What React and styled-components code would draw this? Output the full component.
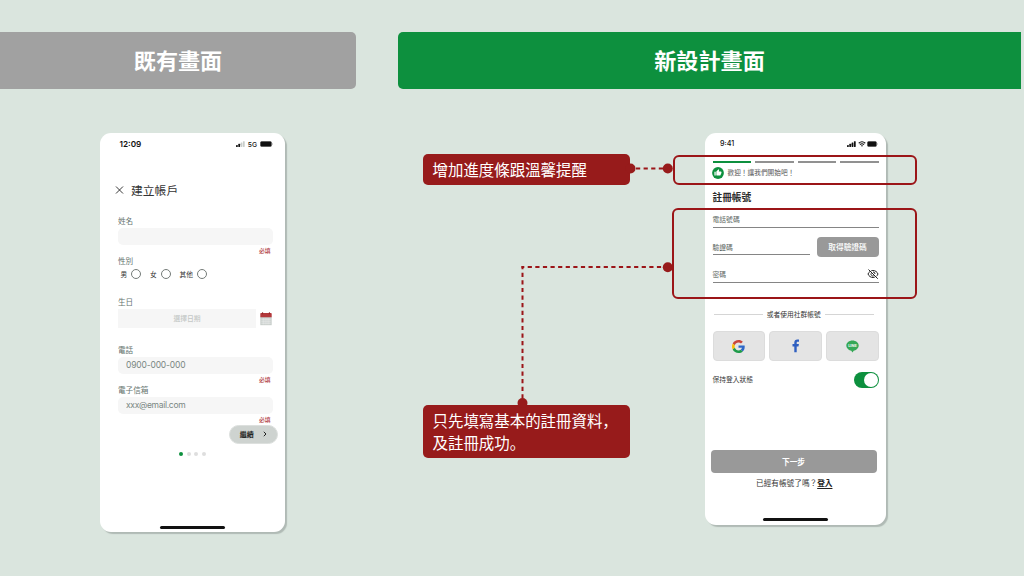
import React, { useState } from 'react'
import styled, { createGlobalStyle } from 'styled-components'

const GlobalStyle = createGlobalStyle`
* {
  box-sizing: border-box;
}

body {
  margin: 0;
  background: #dae5de;
  font-family: "Noto Sans CJK TC", "Noto Sans", sans-serif;
}

button {
  font-family: inherit;
  border: 0;
  padding: 0;
}
`;

const Page = styled.div`
position: relative;
width: 1024px;
height: 576px;
overflow: hidden;
padding-top: 32px;
background: #dae5de;
`;

const Banners = styled.div`
display: flex;
gap: 42px;
height: 57px;
`;

const Banner = styled.h1`
display: flex;
align-items: center;
justify-content: center;
margin: 0;
padding: 0 0 4px 0;
width: ${props => props.$width}px;
border-radius: ${props => props.$radius};
background: ${props => props.$color};
color: #fff;
font-size: 22.1px;
font-weight: 700;
`;

const Board = styled.div`
display: flex;
align-items: flex-start;
padding: 43.5px 0 0 100px;
`;

const Phone = styled.section`
display: flex;
flex-direction: column;
flex: none;
width: ${props => props.$width}px;
height: ${props => props.$height}px;
border-radius: 11px;
background: #fff;
box-shadow: 2px 2px 1px #b0bab5;
`;

const StatusBar = styled.div`
display: flex;
align-items: center;
height: 24px;
padding: ${props => props.$pad};
font-family: Inter, sans-serif;
font-size: ${props => props.$size}px;
font-weight: ${props => props.$weight};
color: #111;

& svg {
  display: block;
}
`;

const StatusIcons = styled.div`
display: flex;
align-items: center;
gap: ${props => props.$gap || 2}px;
margin-left: auto;
font-size: 6.8px;
font-weight: 500;
`;

const HomeBar = styled.div`
width: 65.5px;
height: 3px;
margin: auto auto 3.5px;
border-radius: 2px;
background: #111;
`;

/* 既有畫面 */
const OldTitle = styled.h2`
display: flex;
align-items: center;
gap: 7px;
height: 24px;
margin: 21px 0 13px 15px;
font-size: 11.8px;
font-weight: 400;
color: #333;
`;

const OldForm = styled.form`
display: flex;
flex-direction: column;
padding: 0 12px 0 18px;
`;

const OldLabel = styled.label`
height: ${props => props.$height || 12}px;
margin-top: ${props => props.$top || 0}px;
line-height: ${props => props.$line || 10}px;
font-size: 7.6px;
color: #65736f;
`;

const OldInput = styled.input`
width: 155px;
height: 17px;
padding: 0 8px;
border: 0;
border-radius: 5px;
background: #f6f6f6;
font-family: Inter, sans-serif;
font-size: 8.5px;
letter-spacing: ${props => props.$spacing || 0}px;
color: #6b7a75;

&::placeholder {
  color: #7a8783;
  opacity: 1;
}
`;

const Required = styled.span`
align-self: flex-end;
height: 10px;
margin: 1px 2.5px 0 0;
line-height: 10px;
font-size: 5.8px;
font-weight: 500;
color: #b03a3e;
`;

const Radios = styled.div`
display: flex;
gap: 8.8px;
height: 13px;
margin-bottom: 1px;
padding-left: 2.5px;
`;

const Radio = styled.label`
display: flex;
align-items: center;
gap: 4px;
font-size: 6.7px;
line-height: 10px;
color: #333;
`;

const Circle = styled.span`
width: 10px;
height: 10px;
border: 1px solid #747b78;
border-radius: 50%;
`;

const DateRow = styled.div`
display: flex;
align-items: center;
gap: 3.5px;
`;

const DateBox = styled.div`
width: 138px;
height: 19px;
line-height: 18px;
text-align: center;
background: #f6f6f6;
font-size: 6.8px;
font-weight: 500;
color: #c4c8c6;
`;

const ContinueButton = styled.button`
display: flex;
align-items: center;
justify-content: center;
gap: 9.5px;
align-self: flex-end;
width: 49px;
height: 19px;
margin: 0 -5px 0 0;
border: 1px solid #dde0de;
border-radius: 10px;
background: #ced3d0;
font-size: 7px;
font-weight: 700;
color: #222;
`;

const Dots = styled.div`
display: flex;
justify-content: center;
gap: 3.6px;
margin-top: 8.5px;
`;

const Dot = styled.span`
width: 4px;
height: 4px;
border-radius: 50%;
background: ${props => props.$on ? '#0d903e' : '#dedede'};
`;

/* 說明文字 */
const Notes = styled.div`
display: flex;
flex-direction: column;
gap: 219.5px;
width: 207px;
margin: 21.5px 74.5px 0 138px;
`;

const Note = styled.p`
margin: 0;
padding: 4px 10px 5px 9.5px;
border-radius: 5px;
background: #971b1b;
color: #fff;
font-family: "Noto Sans CJK JP", sans-serif;
font-size: 15.45px;
line-height: 22px;
white-space: nowrap;
`;

const Lines = styled.svg`
position: absolute;
left: 0;
top: 0;
pointer-events: none;
`;

const Frame = styled.div`
position: absolute;
left: ${props => props.$left}px;
top: ${props => props.$top}px;
width: ${props => props.$width}px;
height: ${props => props.$height}px;
border: 2px solid #9b1518;
border-radius: 6px;
`;

/* 新設計畫面 */
const Content = styled.div`
display: flex;
flex-direction: column;
padding: 0 7.5px 0 8px;
`;

const Progress = styled.div`
display: flex;
gap: 4px;
height: 2px;
margin-top: 4.5px;
`;

const Step = styled.span`
flex: 1;
background: ${props => props.$on ? '#0d903e' : '#919191'};
`;

const Welcome = styled.div`
display: flex;
align-items: center;
gap: 3.5px;
height: 12px;
margin: 4px 0 0 -.5px;
font-size: 6.7px;
line-height: 10px;
color: #555;

& span {
  padding-bottom: 2px;
}
`;

const NewTitle = styled.h2`
height: 16px;
margin: 9.5px 0 7.5px;
line-height: 16px;
font-size: 9.7px;
font-weight: 700;
color: #2b2b2b;
`;

const Field = styled.div`
display: flex;
align-items: center;
justify-content: space-between;
width: ${props => props.$width || 166}px;
height: 16px;
padding-bottom: ${props => props.$lift || 0}px;
border-bottom: 1px solid #858585;
font-size: 6.8px;
line-height: 10px;
color: #5c6662;
`;

const CodeRow = styled.div`
display: flex;
align-items: center;
justify-content: space-between;
height: 20px;
margin: 9px 0 10px;
`;

const GrayButton = styled.button`
width: ${props => props.$width}px;
height: ${props => props.$height}px;
padding-bottom: 2px;
border-radius: 4px;
background: #999;
color: #fff;
font-size: 7.7px;
font-weight: ${props => props.$weight || 500};
`;

const NextButton = styled(GrayButton)`
margin-left: -2px;
padding-bottom: 1px;
`;

const Divider = styled.div`
display: flex;
align-items: center;
gap: 4px;
height: 12px;
margin-top: 25.5px;
padding: 0 5px 0 1.5px;
font-size: 6.75px;
line-height: 10px;
color: #333;

& span {
  padding-bottom: 2px;
}

&::before, &::after {
  content: '';
  flex: 1;
  height: 1px;
  background: #d5d5d5;
}
`;

const Socials = styled.div`
display: grid;
grid-template-columns: repeat(3, 1fr);
gap: 4px;
height: 30px;
margin-top: 10.5px;
`;

const SocialButton = styled.button`
display: flex;
align-items: center;
justify-content: center;
border: 1px solid #dcdcdc;
border-radius: 4px;
background: #e4e4e4;
`;

const KeepRow = styled.div`
display: flex;
align-items: center;
justify-content: space-between;
height: 16px;
margin: 11px 0 62px;
font-size: 6.75px;
line-height: 10px;
color: #333;

& > span {
  padding-bottom: 2px;
}
`;

const Toggle = styled.button`
display: flex;
align-items: center;
justify-content: ${props => props.$on ? 'flex-end' : 'flex-start'};
width: 25px;
height: 16px;
padding: 0 1px;
border-radius: 8px;
background: ${props => props.$on ? '#0d903e' : '#bbb'};

& span {
  width: 14px;
  height: 14px;
  border-radius: 50%;
  background: #fff;
}
`;

const LoginText = styled.p`
height: 14px;
margin: 4px 0 0;
line-height: 12px;
padding-right: 2.5px;
text-align: center;
font-size: 7.65px;
color: #333;

& b {
  text-decoration: underline;
  text-underline-offset: 1.5px;
  color: #222;
}
`;

function Signal({ weak }) {
  const heights = [2, 3.2, 4.5, 5.8]
  return (
    <svg width="9" height="6" viewBox="0 0 9 6">
      {heights.map((h, i) =>
        <rect key={i} x={i * 2.3} y={6 - h} width="1.8" height={h} rx=".4" fill={weak && i > 1 ? '#c9cecb' : '#111'} />
      )}
    </svg>
  )
}

function Battery({ width }) {
  return (
    <svg width={width} height="6" viewBox={`0 0 ${width} 6`}>
      <rect x=".2" y=".2" width={width - 1.4} height="5.6" rx="1.5" fill="#999" />
      <rect x=".5" y=".6" width={width - 2.1} height="4.8" rx="1" fill="#111" />
      <path d={`M${width - .9} 2v2q.8-.3.8-1t-.8-1`} fill="#999" />
    </svg>
  )
}

function Wifi() {
  return (
    <svg width="8" height="6" viewBox="0 0 15 12">
      <path d="M1 4.4Q7.5-1.4 14 4.4M3.5 7.2q4-3.4 8 0" fill="none" stroke="#111" strokeWidth="2.3" />
      <path d="M5.3 9.2q2.2-1.7 4.4 0L7.5 11.5z" fill="#111" />
    </svg>
  )
}

function Calendar() {
  return (
    <svg width="12" height="14" viewBox="0 0 12 14">
      <path d="M.3 4.8h11.4v8.4H.3z" fill="#c9cfcc" />
      <path d="M.3 1.7q0-.8.8-.8h9.8q.8 0 .8.8v3.5H.3z" fill="#b3393c" />
      <path d="M2.6.2v2M9.4.2v2" stroke="#8d2225" strokeWidth=".9" />
      <path d="M1.2 7.2h9.6M1.2 9.2h9.6M1.2 11.2h9.6M3.2 6v6.500M5.1 6v6.500M7 6v6.500M8.9 6v6.500" stroke="#f5f6f6" strokeWidth=".45" />
    </svg>
  )
}

function ThumbBadge() {
  return (
    <svg width="12" height="12" viewBox="0 0 24 24">
      <circle cx="12" cy="12" r="11.8" fill="#0d903e" />
      <g transform="translate(4.2 3.8) scale(.64)">
        <path d="M1 21h4V9H1zM23 10c0-1.1-.9-2-2-2h-6.31l.95-4.57.03-.32c0-.41-.17-.79-.44-1.06L14.17 1 7.59 7.59C7.22 7.95 7 8.45 7 9v10c0 1.1.9 2 2 2h9c.83 0 1.54-.5 1.84-1.22l3.02-7.05c.09-.23.14-.47.14-.73z" fill="#fff" />
      </g>
    </svg>
  )
}

function EyeOff() {
  return (
    <svg width="12" height="12" viewBox="0 0 24 24" fill="none" stroke="#222" strokeWidth="2">
      <path d="M8.5 5.5A10 10 0 0 1 12 5c4.5 0 8.3 2.7 10 7a11 11 0 0 1-3.3 4.6M15.5 18.400A10 10 0 0 1 12 19c-4.5 0-8.3-2.7-10-7a11 11 0 0 1 3.9-5" />
      <path d="M12 8a4 4 0 0 1 4 4M8.3 10.5a4 4 0 0 0 5.2 5.2" />
      <path d="M3 3l18.5 18.5" />
    </svg>
  )
}

function GoogleLogo() {
  return (
    <svg width="13" height="13" viewBox="0 0 48 48">
      <path fill="#c8453c" d="M24 9.5c3.54 0 6.71 1.22 9.21 3.6l6.85-6.85C35.9 2.38 30.47 0 24 0 14.62 0 6.51 5.38 2.56 13.22l7.98 6.19C12.43 13.72 17.74 9.5 24 9.5z" />
      <path fill="#2f68c8" d="M46.98 24.55c0-1.57-.15-3.09-.38-4.55H24v9.02h12.94c-.58 2.96-2.26 5.48-4.78 7.18l7.73 6c4.51-4.18 7.09-10.36 7.09-17.65z" />
      <path fill="#FBBC05" d="M10.53 28.59c-.48-1.45-.76-2.99-.76-4.59s.27-3.14.76-4.59l-7.98-6.19C.92 16.46 0 20.12 0 24s.92 7.54 2.56 10.78z" />
      <path fill="#1f9b4a" d="M24 48c6.48 0 11.93-2.13 15.89-5.81l-7.73-6c-2.15 1.45-4.92 2.3-8.16 2.3-6.26 0-11.57-4.22-13.47-9.91l-7.98 6.19C6.51 42.62 14.62 48 24 48z" />
    </svg>
  )
}

function FacebookLogo() {
  return (
    <svg width="9" height="14" viewBox="-1 0 9 14">
      <path d="M2.3 13.3V7.4H.5V5.1h1.8V3.5C2.3 1.5 3.500.5 5.2.5c.8 0 1.5.1 1.8.1v2.1H5.8c-.9 0-1.1.5-1.1 1.1v1.3h2.2l-.4 2.3H4.7v5.9z" fill="#2f5fc0" />
    </svg>
  )
}

function LineLogo() {
  return (
    <svg width="13" height="13" viewBox="0 0 13 13">
      <path d="M6.5.6c3.4 0 6.2 2.2 6.2 5 0 2.7-2.9 4.9-5 5.200L6.5 12.500 5.3 10.800C3.2 10.500.3 8.300.3 5.600.3 2.800 3.100.6 6.500.6z" fill="#36a857" />
      <text x="6.5" y="7" textAnchor="middle" fontFamily="Inter, sans-serif" fontSize="3.9" fontWeight="800" fill="#e4f2e7">LINE</text>
    </svg>
  )
}

function OldScreen() {
  return (
    <Phone $width={185} $height={399.5}>
      <StatusBar $pad="0 12px 1px 19.5px" $size={8.2} $weight={600}>
        12:09
        <StatusIcons $gap={3}><Signal weak />5G<Battery width={13} /></StatusIcons>
      </StatusBar>
      <OldTitle>
        <svg width="9" height="9" viewBox="0 0 9 9"><path d="M1 1.5l7 7M8 1.5l-7 7" stroke="#222" strokeWidth=".9" /></svg>
        建立帳戶
      </OldTitle>
      <OldForm>
        <OldLabel $height={13} $line={12}>姓名</OldLabel>
        <OldInput />
        <Required>必填</Required>
        <OldLabel>性別</OldLabel>
        <Radios>
          {['男', '女', '其他'].map((el) =>
            <Radio key={el}>{el}<Circle /></Radio>
          )}
        </Radios>
        <OldLabel $height={13.5} $top={14} $line={11}>生日</OldLabel>
        <DateRow>
          <DateBox>選擇日期</DateBox>
          <Calendar />
        </DateRow>
        <OldLabel $height={13} $top={15.5} $line={12}>電話</OldLabel>
        <OldInput placeholder="0900-000-000" $spacing={-.16} />
        <Required>必填</Required>
        <OldLabel>電子信箱</OldLabel>
        <OldInput placeholder="xxx@email.com" $spacing={-.3} />
        <Required>必填</Required>
        <ContinueButton type="button">
          繼續
          <svg width="4" height="6" viewBox="0 0 4 6"><path d="M.8.8L3 3 .8 5.2" fill="none" stroke="#222" strokeWidth="1" /></svg>
        </ContinueButton>
      </OldForm>
      <Dots>
        {[0, 1, 2, 3].map((el) => <Dot key={el} $on={el === 0} />)}
      </Dots>
      <HomeBar />
    </Phone>
  )
}

function NewScreen() {
  const [keep, setKeep] = useState(true)

  return (
    <Phone $width={181.5} $height={392}>
      <StatusBar $pad="0 8px 1.5px 15.5px" $size={7.2} $weight={500}>
        9:41
        <StatusIcons $gap={1.5}><Signal /><Wifi /><Battery width={11} /></StatusIcons>
      </StatusBar>
      <Content>
        <Progress>
          {[0, 1, 2, 3].map((el) => <Step key={el} $on={el === 0} />)}
        </Progress>
        <Welcome><ThumbBadge /><span>歡迎！讓我們開始吧！</span></Welcome>
        <NewTitle>註冊帳號</NewTitle>
        <Field $lift={2}>電話號碼</Field>
        <CodeRow>
          <Field $width={97}>驗證碼</Field>
          <GrayButton $width={62} $height={20}>取得驗證碼</GrayButton>
        </CodeRow>
        <Field $lift={1}>密碼<EyeOff /></Field>
        <Divider><span>或者使用社群帳號</span></Divider>
        <Socials>
          <SocialButton><GoogleLogo /></SocialButton>
          <SocialButton><FacebookLogo /></SocialButton>
          <SocialButton><LineLogo /></SocialButton>
        </Socials>
        <KeepRow>
          <span>保持登入狀態</span>
          <Toggle $on={keep} onClick={() => setKeep(!keep)}><span /></Toggle>
        </KeepRow>
        <NextButton $width={166} $height={23} $weight={700}>下一步</NextButton>
        <LoginText>已經有帳號了嗎？<b>登入</b></LoginText>
      </Content>
      <HomeBar />
    </Phone>
  )
}

function App() {
  return (
    <Page>
      <GlobalStyle />
      <Banners>
        <Banner $width={356} $radius="0 5px 5px 0" $color="#a1a1a1">既有畫面</Banner>
        <Banner $width={623} $radius="5px 0 0 5px" $color="#0d903e">新設計畫面</Banner>
      </Banners>
      <Board>
        <OldScreen />
        <Notes>
          <Note>增加進度條跟溫馨提醒</Note>
          <Note>只先填寫基本的註冊資料，<br />及註冊成功。</Note>
        </Notes>
        <NewScreen />
      </Board>
      <Frame $left={673} $top={155} $width={244} $height={30} />
      <Frame $left={672} $top={208} $width={245} $height={91} />
      <Lines width="1024" height="576">
        <g fill="none" stroke="#9b1518" strokeWidth="2" strokeDasharray="4.2 3.4">
          <path d="M636 168.5H663" />
          <path d="M521.5 267H663" strokeDashoffset="1.4" />
          <path d="M522.5 266V400" strokeDashoffset=".9" />
        </g>
        <g fill="#971b1b">
          <circle cx="630.5" cy="168.5" r="5" />
          <circle cx="667.8" cy="168.5" r="5" />
          <circle cx="667.8" cy="267.2" r="5" />
          <circle cx="522.5" cy="403" r="5" />
        </g>
      </Lines>
    </Page>
  )
}

export default App
